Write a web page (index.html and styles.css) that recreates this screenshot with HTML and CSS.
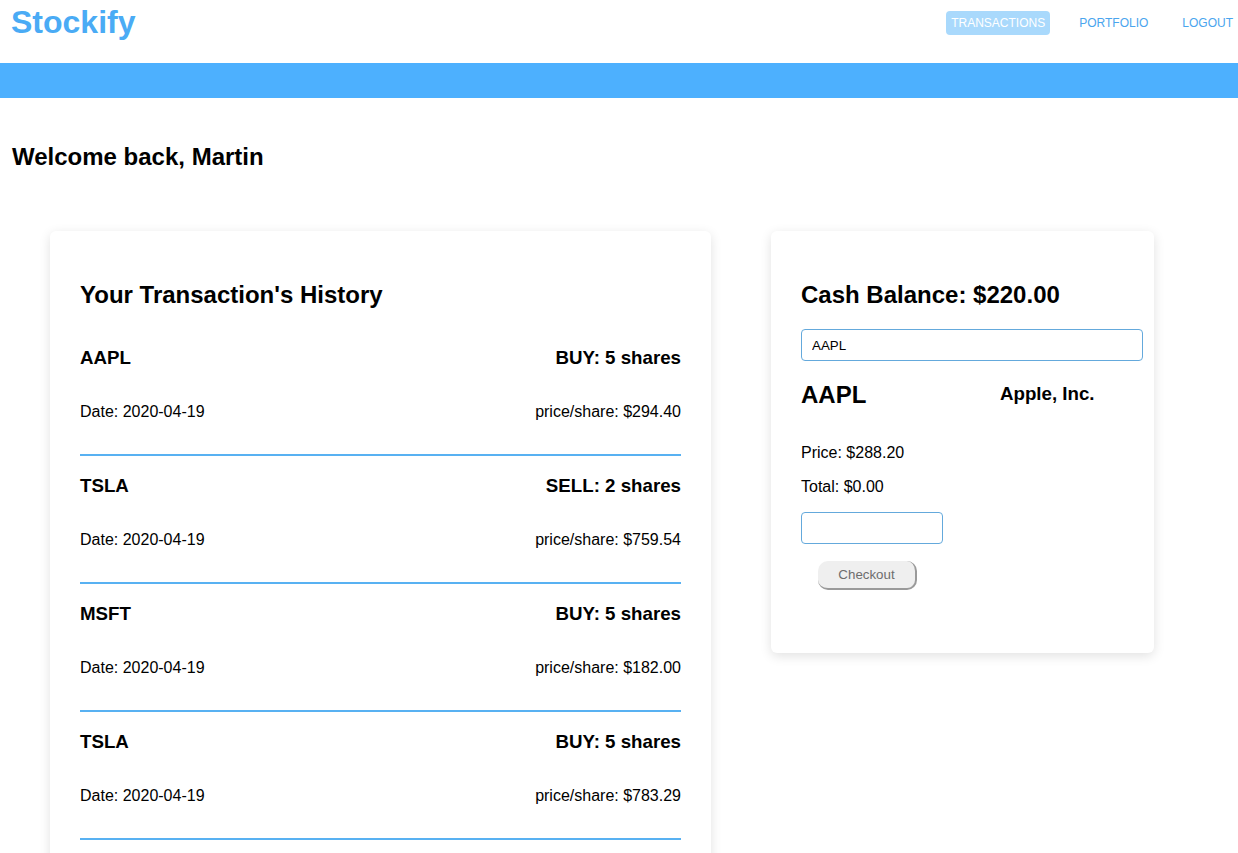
FILE: index.html
```html
<!DOCTYPE html>
<html>
<head>
<meta charset="utf-8">
<link rel="stylesheet" href="styles.css">
</head>
<body>
<header class="topbar">
  <div class="logo">Stockify</div>
  <nav class="nav">
    <a class="nav-link active">TRANSACTIONS</a>
    <a class="nav-link">PORTFOLIO</a>
    <a class="nav-link">LOGOUT</a>
  </nav>
</header>
<div class="band"></div>
<h2 class="welcome">Welcome back, Martin</h2>
<main class="content">
  <section class="card history">
    <h2 class="card-title">Your Transaction's History</h2>
    <div class="tx">
      <div class="tx-row main"><span>AAPL</span><span>BUY: 5 shares</span></div>
      <div class="tx-row sub"><span>Date: 2020-04-19</span><span>price/share: $294.40</span></div>
    </div>
    <div class="tx">
      <div class="tx-row main"><span>TSLA</span><span>SELL: 2 shares</span></div>
      <div class="tx-row sub"><span>Date: 2020-04-19</span><span>price/share: $759.54</span></div>
    </div>
    <div class="tx">
      <div class="tx-row main"><span>MSFT</span><span>BUY: 5 shares</span></div>
      <div class="tx-row sub"><span>Date: 2020-04-19</span><span>price/share: $182.00</span></div>
    </div>
    <div class="tx">
      <div class="tx-row main"><span>TSLA</span><span>BUY: 5 shares</span></div>
      <div class="tx-row sub"><span>Date: 2020-04-19</span><span>price/share: $783.29</span></div>
    </div>
  </section>
  <section class="card trade">
    <h2 class="card-title">Cash Balance: $220.00</h2>
    <input class="search" type="text" value="AAPL">
    <div class="quote">
      <span class="symbol">AAPL</span>
      <span class="company">Apple, Inc.</span>
    </div>
    <p class="line price">Price: $288.20</p>
    <p class="line">Total: $0.00</p>
    <input class="qty" type="text">
    <button class="checkout">Checkout</button>
  </section>
</main>
</body>
</html>
```
FILE: styles.css
```css
* { box-sizing: border-box; }
html, body { margin: 0; padding: 0; }
body {
  font-family: "Liberation Sans", Arial, sans-serif;
  color: #000;
  background: #fff;
  width: 1238px;
  height: 853px;
  overflow: hidden;
}
.topbar {
  height: 63px;
  display: flex;
  justify-content: space-between;
  align-items: flex-start;
  padding: 0 0 0 11px;
}
.logo {
  font-size: 32px;
  font-weight: bold;
  line-height: 44px;
  color: #4aabf5;
}
.nav {
  display: flex;
  gap: 24px;
  margin-top: 11px;
}
.nav-link {
  display: block;
  font-size: 12px;
  line-height: 24px;
  height: 24px;
  padding: 0 5px;
  color: #4aa5ee;
  border-radius: 4px;
}
.nav-link.active {
  background: #a9d9fc;
  color: #fff;
}
.band {
  height: 35px;
  background: #4db0fe;
}
.welcome {
  margin: 45px 0 0 12px;
  font-size: 24px;
  line-height: 28px;
  font-weight: bold;
}
.content {
  display: flex;
  align-items: flex-start;
  gap: 60px;
  padding-left: 50px;
  margin-top: 60px;
}
.card {
  background: #fff;
  border-radius: 6px;
  box-shadow: 0 3px 12px rgba(0, 0, 0, 0.12);
  padding: 30px;
}
.history { width: 661px; }
.trade { width: 383px; padding-bottom: 63px; }
.card-title {
  font-size: 24px;
  line-height: 28px;
  margin: 20px 0 19px;
  font-weight: bold;
}
.trade .card-title { margin-bottom: 20px; }
.tx {
  padding: 19px 0 32px;
  border-bottom: 2px solid #58b1f2;
}
.tx-row {
  display: flex;
  justify-content: space-between;
}
.tx-row.main {
  font-size: 18.72px;
  font-weight: bold;
  line-height: 22px;
}
.tx-row.sub {
  font-size: 16px;
  line-height: 20px;
  margin-top: 33px;
}
.search {
  display: block;
  width: 342px;
  height: 32px;
  border: 1px solid #64a9dc;
  border-radius: 4px;
  padding: 0 10px;
  font-family: "Liberation Sans", Arial, sans-serif;
  font-size: 13.33px;
  color: #000;
  outline: none;
}
.quote {
  display: grid;
  grid-template-columns: 199px 1fr;
  align-items: center;
  margin-top: 20px;
  height: 28px;
}
.symbol {
  font-size: 24px;
  font-weight: bold;
  line-height: 28px;
}
.company {
  font-size: 18.72px;
  font-weight: bold;
  line-height: 22px;
  margin-top: -2px;
}
.line {
  font-size: 16px;
  line-height: 20px;
  margin: 14px 0 0;
}
.line.price { margin-top: 34px; }
.qty {
  display: block;
  margin-top: 15px;
  width: 142px;
  height: 32px;
  border: 1px solid #64a9dc;
  border-radius: 4px;
  outline: none;
}
.checkout {
  display: block;
  margin: 17px 0 0 17px;
  width: 99px;
  height: 29px;
  background: #efefef;
  border: none;
  border-right: 2px solid #9a9a9a;
  border-bottom: 2px solid #9a9a9a;
  border-radius: 10px;
  font-family: "Liberation Sans", Arial, sans-serif;
  font-size: 13.33px;
  color: #6d6d6d;
  padding: 0;
}
```
